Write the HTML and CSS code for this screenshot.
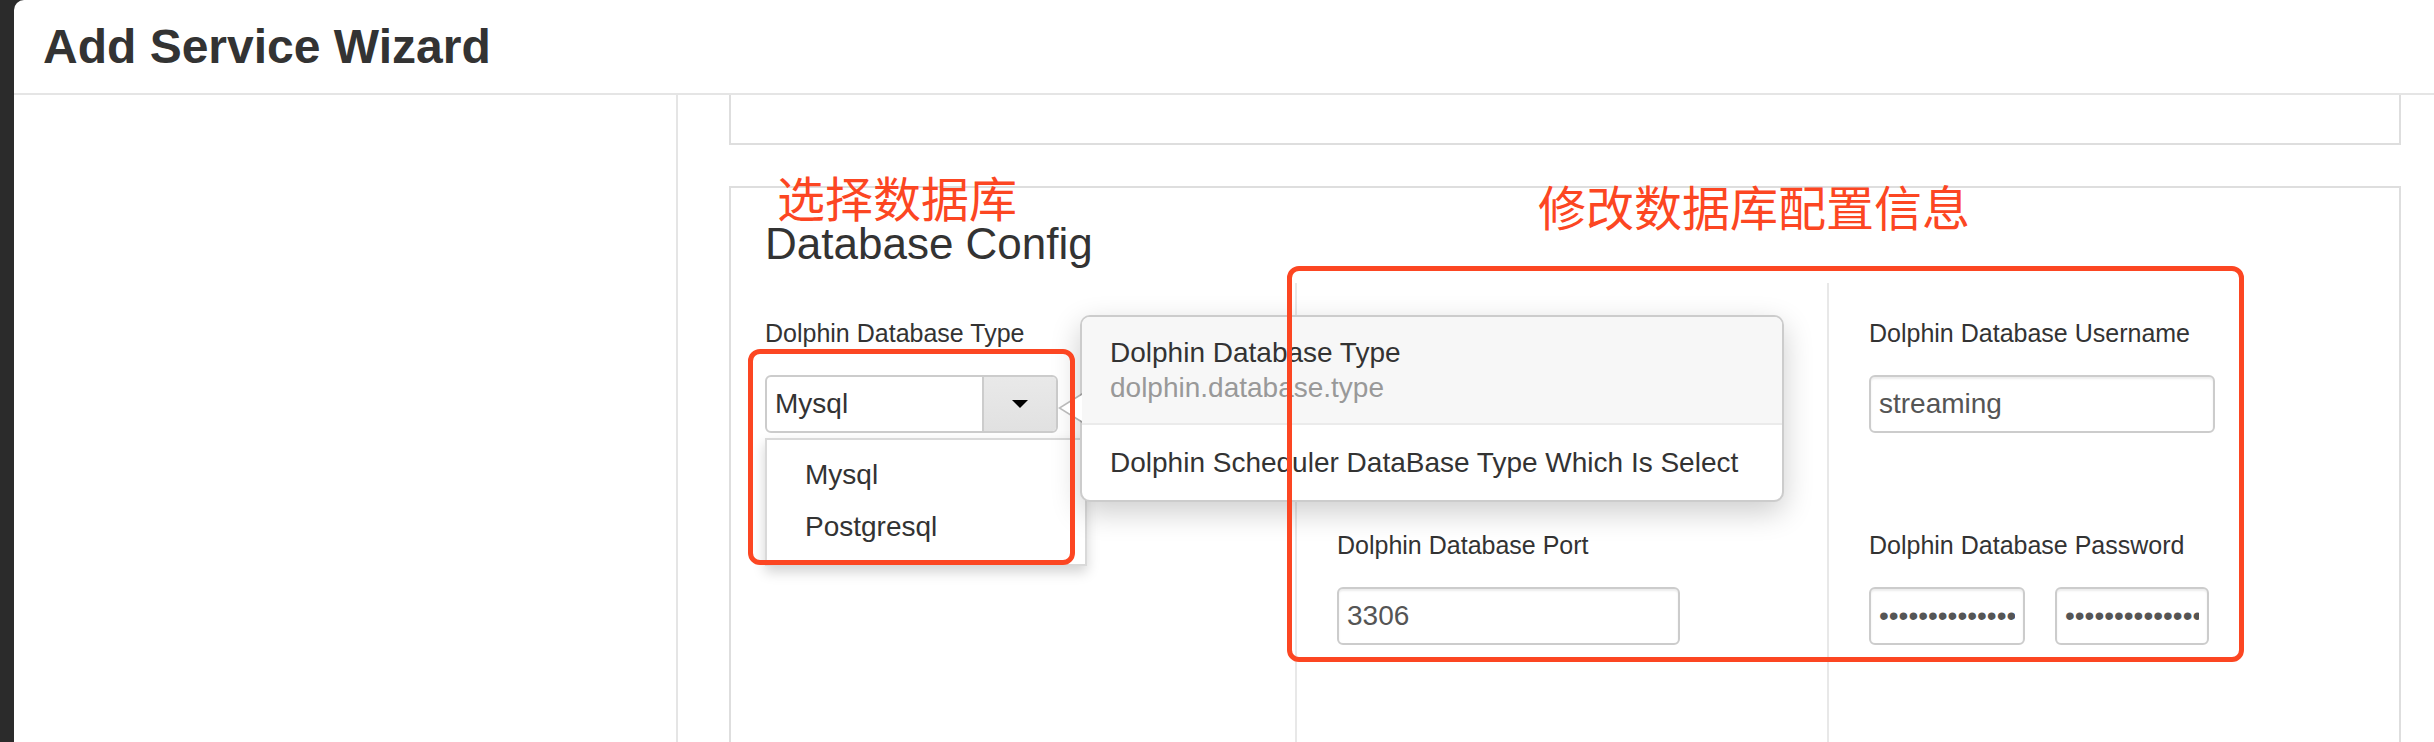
FILE: index.html
```html
<!DOCTYPE html>
<html lang="en">
<head>
<meta charset="utf-8">
<title>Add Service Wizard</title>
<link rel="stylesheet" href="styles.css">
</head>
<body>
<div class="modal">
  <header class="modal-header">
    <h1 class="modal-title">Add Service Wizard</h1>
  </header>
  <div class="modal-body">
    <aside class="wizard-nav"></aside>
    <main class="wizard-content">
      <section class="panel panel-prev"></section>
      <section class="panel panel-db">
        <h2 class="panel-title">Database Config</h2>
        <div class="config-grid">
          <div class="config-col">
            <div class="form-group">
              <label class="control-label">Dolphin Database Type</label>
              <div class="combo">
                <div class="combo-field">
                  <span class="combo-value">Mysql</span>
                  <span class="combo-btn"><span class="caret"></span></span>
                </div>
                <ul class="combo-menu">
                  <li>Mysql</li>
                  <li>Postgresql</li>
                </ul>
              </div>
            </div>
          </div>
          <div class="config-col">
            <div class="form-group">
              <label class="control-label">Dolphin Database Host</label>
              <input class="form-control input-port" type="text" value="">
            </div>
            <div class="form-group">
              <label class="control-label">Dolphin Database Port</label>
              <input class="form-control input-port" type="text" value="3306">
            </div>
          </div>
          <div class="config-col">
            <div class="form-group">
              <label class="control-label">Dolphin Database Username</label>
              <input class="form-control input-user" type="text" value="streaming">
            </div>
            <div class="form-group">
              <label class="control-label">Dolphin Database Password</label>
              <div class="pw-row">
                <input class="form-control input-pw" type="password" value="abcdefghijklmn">
                <input class="form-control input-pw2" type="password" value="abcdefghijklmn">
              </div>
            </div>
          </div>
        </div>

        <div class="popover">
          <span class="popover-arrow"></span>
          <div class="popover-title">
            <div class="popover-name">Dolphin Database Type</div>
            <div class="popover-key">dolphin.database.type</div>
          </div>
          <div class="popover-content">Dolphin Scheduler DataBase Type Which Is Select</div>
        </div>

        <div class="annot-text annot-text-type">选择数据库</div>
        <div class="annot-text annot-text-config">修改数据库配置信息</div>
        <div class="annot-box annot-box-type"></div>
        <div class="annot-box annot-box-config"></div>
      </section>
    </main>
  </div>
</div>
</body>
</html>
```

FILE: styles.css
```css
* { box-sizing: border-box; }

html, body {
  margin: 0;
  height: 100%;
}

body {
  background: #2b2b2b;
  font-family: "Liberation Sans", Arial, sans-serif;
  color: #333;
  overflow: hidden;
}

.modal {
  margin-left: 14px;
  height: 742px;
  background: #fff;
  border-top-left-radius: 10px;
  overflow: hidden;
  display: flex;
  flex-direction: column;
}

.modal-header {
  flex: none;
  height: 95px;
  border-bottom: 2px solid #e5e5e5;
  padding: 19px 0 0 29px;
}

.modal-title {
  margin: 0;
  font-size: 48px;
  line-height: 56px;
  font-weight: 700;
  color: #333;
}

.modal-body {
  flex: 1;
  display: flex;
  min-height: 0;
}

.wizard-nav {
  flex: none;
  width: 664px;
  border-right: 2px solid #e5e5e5;
}

.wizard-content {
  flex: 1;
  padding: 0 33px 0 51px;
}

.panel {
  border: 2px solid #dedede;
  background: #fff;
}

.panel-prev {
  height: 50px;
  border-top: none;
}

.panel-db {
  position: relative;
  margin-top: 41px;
  padding: 31px 38px 0 34px;
  border-bottom: none;
  height: 700px;
}

.panel-title {
  margin: 0 0 14px;
  font-size: 44px;
  line-height: 50px;
  font-weight: 400;
  color: #333;
}

.config-grid {
  display: grid;
  grid-template-columns: 530px 532px 1fr;
  height: 600px;
}

.config-col {
  padding-top: 32px;
}

.config-col + .config-col {
  border-left: 2px solid #e8e8e8;
  padding-left: 40px;
}

.form-group {
  margin-bottom: 94px;
}

.control-label {
  display: block;
  font-size: 25px;
  line-height: 36px;
  margin-bottom: 24px;
  color: #333;
}

.form-control {
  display: block;
  height: 58px;
  margin: 0;
  border: 2px solid #ccc;
  border-radius: 6px;
  padding: 0 8px;
  font: 28px "Liberation Sans", Arial, sans-serif;
  color: #555;
  background: #fff;
  box-shadow: inset 0 2px 2px rgba(0, 0, 0, 0.075);
  outline: none;
}

.input-port { width: 343px; }
.input-user { width: 346px; }
.input-pw { width: 156px; }
.input-pw2 { width: 154px; }

.pw-row {
  display: flex;
  gap: 30px;
}

.combo {
  position: relative;
  width: 293px;
}

.combo-field {
  display: flex;
  height: 58px;
  border: 2px solid #ccc;
  border-radius: 6px;
  overflow: hidden;
  background: #fff;
}

.combo-value {
  flex: 1;
  padding-left: 8px;
  font-size: 28px;
  line-height: 54px;
  color: #333;
}

.combo-btn {
  width: 74px;
  display: flex;
  align-items: center;
  justify-content: center;
  background: linear-gradient(#e9e9e9, #e1e1e1);
  border-left: 2px solid #ccc;
}

.caret {
  width: 0;
  height: 0;
  border-top: 8px solid #000;
  border-left: 8px solid transparent;
  border-right: 8px solid transparent;
}

.combo-menu {
  position: absolute;
  top: 63px;
  left: 0;
  width: 322px;
  margin: 0;
  padding: 9px 0 11px;
  list-style: none;
  background: #fff;
  border: 2px solid rgba(0, 0, 0, 0.15);
  box-shadow: 0 6px 12px rgba(0, 0, 0, 0.175);
  z-index: 2;
}

.combo-menu li {
  font-size: 28px;
  line-height: 52px;
  padding-left: 38px;
  color: #333;
}

.popover {
  position: absolute;
  left: 349px;
  top: 127px;
  width: 704px;
  background: #fff;
  border: 2px solid rgba(0, 0, 0, 0.2);
  border-radius: 10px;
  box-shadow: 0 10px 30px rgba(0, 0, 0, 0.2);
  z-index: 3;
}

.popover-arrow,
.popover-arrow::after {
  position: absolute;
  width: 0;
  height: 0;
  border-style: solid;
  border-color: transparent;
}

.popover-arrow {
  left: -24px;
  top: 76px;
  border-width: 15px 24px 15px 0;
  border-right-color: rgba(0, 0, 0, 0.25);
}

.popover-arrow::after {
  content: "";
  left: 3px;
  top: -13px;
  border-width: 13px 21px 13px 0;
  border-right-color: #fff;
}

.popover-title {
  background: #f7f7f7;
  border-bottom: 2px solid #ebebeb;
  border-radius: 8px 8px 0 0;
  padding: 18px 28px;
}

.popover-name,
.popover-key {
  font-size: 28px;
  line-height: 35px;
}

.popover-name { color: #333; }
.popover-key { color: #999; }

.popover-content {
  padding: 20px 28px;
  font-size: 28px;
  line-height: 35px;
  color: #333;
}

.annot-text {
  position: absolute;
  font-family: "Noto Sans CJK SC", sans-serif;
  font-size: 48px;
  line-height: 44px;
  color: #fc4622;
  white-space: nowrap;
  z-index: 5;
}

.annot-text-type { left: 46px; top: -14px; }
.annot-text-config { left: 807px; top: -5px; }

.annot-box {
  position: absolute;
  border: 5px solid #fc4622;
  border-radius: 12px;
  z-index: 5;
}

.annot-box-type {
  left: 17px;
  top: 161px;
  width: 327px;
  height: 216px;
}

.annot-box-config {
  left: 556px;
  top: 78px;
  width: 957px;
  height: 396px;
}
```
